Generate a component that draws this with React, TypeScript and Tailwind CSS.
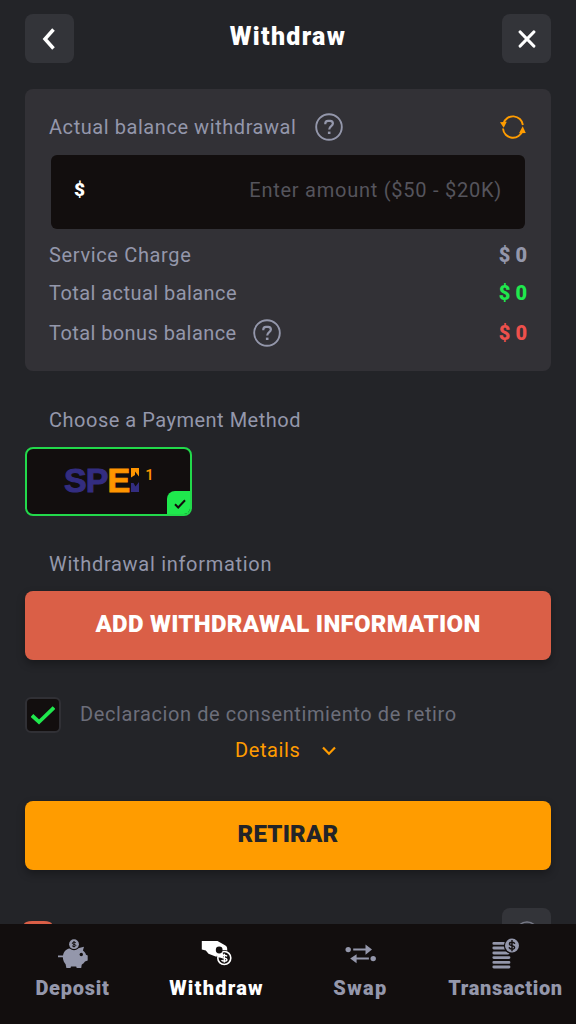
import React from "react";
import clsx from "clsx";

type IconProps = { className?: string };

const HelpIcon = ({ className }: IconProps) => (
  <svg
    viewBox="0 0 28 28"
    fill="none"
    stroke="currentColor"
    className={clsx("h-7 w-7 text-[#9497ab]", className)}
  >
    <circle cx="14" cy="14" r="12.8" strokeWidth="1.9" />
    <path
      d="M10.3 11.2V10.6C10.3 9 11.5 7.9 13 7.9H15.2C16.8 7.9 17.9 9 17.9 10.6C17.9 13.2 14.2 13.2 14.2 16.6"
      strokeWidth="2.2"
    />
    <path d="M14.2 18.6V21" strokeWidth="2.6" />
  </svg>
);

const RefreshIcon = () => (
  <svg viewBox="0 0 26 24" className="h-6 w-[26px] text-[#ff9c00]">
    <g fill="none" stroke="currentColor" strokeWidth="1.9">
      <path d="M3.4 8.5A10 10 0 0 1 22.9 10" />
      <path d="M3 13.5A10 10 0 0 0 22.6 15.5" />
    </g>
    <path d="M0 7.2L6.8 6.8L3.7 12.8Z" fill="currentColor" />
    <path d="M25.8 18L19 18.2L22.7 11.2Z" fill="currentColor" />
  </svg>
);

const DepositIcon = () => (
  <svg viewBox="0 0 30 30" className="h-[30px] w-[30px]">
    <path
      fill="currentColor"
      d="M0 16.6H5C5.7 12 9 9.2 13 9.2H20L26 7.8L24.9 11.6C26.5 12.8 27.6 14.2 28 15.7L29.7 16.4V21.4L27 22.5C26 24 24.8 25 23.7 25.7L23.2 29H18.7L18.2 27.4H13L12.5 29H8.4L7.6 25.2C6 23.6 5 21.2 4.8 18.3H0Z"
    />
    <circle cx="16" cy="5.4" r="5.8" fill="#120e0e" />
    <circle cx="16" cy="5.2" r="4.9" fill="currentColor" />
    <path
      d="M17.9 3.9C17.3 2.9 14.3 2.8 14.3 4.3C14.3 5.7 17.8 4.9 17.8 6.4C17.8 7.8 14.7 7.8 14.1 6.7M16 2V8.4"
      fill="none"
      stroke="#120e0e"
      strokeWidth="1"
    />
    <circle cx="23.3" cy="15.5" r="1.7" fill="#120e0e" />
  </svg>
);

const WithdrawIcon = () => (
  <svg viewBox="0 0 31 30" className="h-[30px] w-[31px]">
    <path
      fill="currentColor"
      d="M.8 2H16.5L24 6.2C25.6 7.2 26.2 8.2 26.2 10V13L20 18.6L14.6 17.4L7.5 14.8L4.8 11.4L.8 10.6Z"
    />
    <circle cx="23.3" cy="19" r="7.9" fill="#120e0e" />
    <circle cx="23.3" cy="19" r="6.5" fill="none" stroke="currentColor" strokeWidth="1.6" />
    <path d="M13.5 13L21 11.5L22.5 16.6L21 19L17 18.2Z" fill="currentColor" />
    <circle cx="18.2" cy="11" r="3.4" fill="#120e0e" />
    <path
      d="M26 17.4C25.3 15.9 20.9 15.8 20.9 17.9C20.9 19.7 25.9 18.5 25.9 20.7C25.9 22.6 21.3 22.6 20.6 20.9M23.3 14.8V23.4"
      fill="none"
      stroke="currentColor"
      strokeWidth="1.4"
    />
  </svg>
);

const SwapIcon = () => (
  <svg viewBox="0 0 32 20" className="h-5 w-8" fill="currentColor">
    <circle cx="3.2" cy="5.6" r="2.7" />
    <path d="M8.2 4.6H20.5V0.5L27 5.6L20.5 10.7V6.6H8.2Z" />
    <circle cx="28.2" cy="14.6" r="2.7" />
    <path d="M23.9 13.6H11.6V10.2L5.2 14.6L11.6 19.2V15.6H23.9Z" />
  </svg>
);

const TransactionIcon = () => (
  <svg viewBox="0 0 28 32" className="h-8 w-7">
    <path
      d="M1.8 5.4H13M1.8 10H13M1.8 15H16M1.8 19.6H17M1.8 24.4H17M1.8 29H17"
      stroke="currentColor"
      strokeWidth="2.8"
      strokeLinecap="round"
    />
    <circle cx="20" cy="7.6" r="8.2" fill="#120e0e" />
    <circle cx="20" cy="7.6" r="7" fill="currentColor" />
    <path
      d="M22.8 5.9C22.2 3.7 17.4 3.7 17.4 6C17.4 8.3 22.6 6.9 22.6 9.4C22.6 11.8 17.8 11.8 17.1 9.3M20 2V13.2"
      fill="none"
      stroke="#120e0e"
      strokeWidth="1.4"
    />
  </svg>
);

const AmountRow = ({
  label,
  labelClass,
  color,
  help,
}: {
  label: string;
  labelClass: string;
  color: string;
  help?: boolean;
}) => (
  <div className="flex h-full items-center justify-between">
    <div className="flex items-center">
      <span className={clsx("text-xl", labelClass)}>{label}</span>
      {help && <HelpIcon className="ml-4" />}
    </div>
    <span className={clsx("-mr-px text-xl font-black", color)}>$ 0</span>
  </div>
);

const navItems = [
  { label: "Deposit", icon: <DepositIcon />, spacing: "tracking-[0.75px]" },
  { label: "Withdraw", icon: <WithdrawIcon />, spacing: "tracking-[1.25px]", active: true },
  { label: "Swap", icon: <SwapIcon />, spacing: "tracking-[1.4px]" },
  { label: "Transaction", icon: <TransactionIcon />, spacing: "tracking-[0.65px]" },
];

const App = () => {
  return (
    <div className="flex h-[1024px] w-[576px] flex-col overflow-hidden bg-[#232428] font-['Roboto',sans-serif] text-[#9497ab]">
      {/* Header */}
      <header className="mx-[25px] mt-3.5 flex h-[49px] shrink-0 items-center justify-between">
        <button className="flex h-[49px] w-[49px] items-center justify-center rounded-lg bg-[#333439] pr-0.5">
          <svg viewBox="0 0 14 22" className="h-[22px] w-3.5 text-white">
            <path d="M11.5 1.5L3 11L11.5 20.5" fill="none" stroke="currentColor" strokeWidth="3.5" />
          </svg>
        </button>
        <h1 className="-mt-1 text-[25px] leading-7 font-black tracking-[1.3px] text-white">
          Withdraw
        </h1>
        <button className="flex h-[49px] w-[49px] items-center justify-center rounded-lg bg-[#333439] pl-px">
          <svg viewBox="0 0 18 18" className="h-[18px] w-[18px] text-white">
            <path
              d="M2.2 2L15.8 16M15.8 2L2.2 16"
              fill="none"
              stroke="currentColor"
              strokeWidth="3.2"
              strokeLinecap="round"
            />
          </svg>
        </button>
      </header>

      {/* Balance */}
      <section className="mx-[25px] mt-[26px] h-[282px] shrink-0 rounded-lg bg-[#323136] pt-[21px] pr-[25px] pl-6">
        <div className="flex h-[34px] items-center justify-between">
          <div className="flex items-center">
            <span className="text-xl tracking-[0.56px]">Actual balance withdrawal</span>
            <HelpIcon className="ml-[18px]" />
          </div>
          <RefreshIcon />
        </div>
        <div className="mt-[11px] mr-px ml-0.5 flex h-[74px] items-center justify-between rounded-md bg-[#120e0e] px-[23px] pb-1">
          <span className="text-[19px] font-black text-white">$</span>
          <span className="text-xl tracking-[0.75px] text-[#55545c]">
            Enter amount ($50 - $20K)
          </span>
        </div>
        <div className="mt-[6px] grid grid-rows-[39px_38px_42px]">
          <AmountRow
            label="Service Charge"
            labelClass="tracking-[0.65px]"
            color="text-[#9497ab]"
          />
          <AmountRow
            label="Total actual balance"
            labelClass="tracking-[0.44px]"
            color="text-[#1fe84d]"
          />
          <AmountRow
            label="Total bonus balance"
            labelClass="tracking-[0.42px]"
            color="text-[#ed504c]"
            help
          />
        </div>
      </section>

      {/* Payment method */}
      <h2 className="mt-[35px] ml-[49px] text-xl leading-7 tracking-[0.51px]">
        Choose a Payment Method
      </h2>
      <div className="relative mt-[13px] ml-[25px] flex h-[69px] w-[167px] shrink-0 overflow-hidden rounded-lg border-2 border-[#22d94b] bg-[#120e0e] pt-[13px] pl-[37px]">
        <span className="flex h-9 items-center font-['Liberation_Sans',sans-serif] text-[34px] leading-9 font-bold tracking-[-0.9px] text-[#332d80] [-webkit-text-stroke:1px_currentColor]">
          SP<span className="text-[#ff9500]">E</span>
        </span>
        <svg viewBox="0 0 8 24" className="mt-[6px] ml-[2px] h-6 w-2">
          <path d="M0 0H8V8.5L4 3.5V7L0 9.5Z" fill="#ff9500" />
          <path d="M0 15H2.5L4.5 18.5L8 14V24H0Z" fill="#332d80" />
        </svg>
        <span className="mt-[3px] ml-[6px] text-[15px] leading-5 font-medium text-[#ff9500]">
          1
        </span>
        <div className="absolute right-[-2px] bottom-[-2px] flex h-[25px] w-[25px] items-center justify-center rounded-tl-lg bg-[#1fe84d]">
          <svg viewBox="0 0 12 10" className="h-2.5 w-3">
            <path d="M1 5.3L4.2 8.5L11 1.3" fill="none" stroke="#120e0e" strokeWidth="2" />
          </svg>
        </div>
      </div>

      {/* Withdrawal information */}
      <h2 className="mt-[34px] ml-[49px] text-xl leading-7 tracking-[0.7px]">
        Withdrawal information
      </h2>
      <button className="mx-[25px] mt-[13px] h-[69px] shrink-0 rounded-lg bg-[#da5f47] pb-[3px] text-2xl font-black tracking-[0.3px] text-white shadow-[0_4px_8px_rgba(0,0,0,0.3)]">
        ADD WITHDRAWAL INFORMATION
      </button>

      {/* Consent */}
      <div className="mt-[37px] ml-[25px] flex h-9 shrink-0">
        <div className="flex h-9 w-9 items-center justify-center rounded-md border-2 border-[#303035] bg-[#120e0e]">
          <svg viewBox="0 0 24 20" className="h-5 w-6 shrink-0">
            <path d="M1 10.5L8 17L23 2.5" fill="none" stroke="#1fe84d" strokeWidth="3.8" />
          </svg>
        </div>
        <span className="mt-[3px] ml-[19px] text-xl leading-7 tracking-[0.6px] text-[#6c6e7a]">
          Declaracion de consentimiento de retiro
        </span>
      </div>
      <button className="mt-[3px] ml-[235px] flex h-7 shrink-0 items-center self-start text-xl tracking-[0.6px] text-[#ff9c00]">
        Details
        <svg viewBox="0 0 14 10" className="mt-0.5 ml-[22px] h-2.5 w-3.5">
          <path d="M1 1.5L7 7.7L13 1.5" fill="none" stroke="currentColor" strokeWidth="2.2" />
        </svg>
      </button>

      <button className="mx-[25px] mt-[37px] h-[69px] shrink-0 rounded-lg bg-[#ff9c00] pb-[3px] text-2xl font-black tracking-[0.2px] text-[#232428] shadow-[0_4px_8px_rgba(0,0,0,0.3)]">
        RETIRAR
      </button>

      {/* Content scrolled under the bottom bar */}
      <div className="mt-[38px] flex h-4 shrink-0 justify-between overflow-hidden pr-[25px] pl-6">
        <div className="mt-[13px] h-7 w-7 rounded-[8px/3px] bg-[#da5f47]" />
        <div className="flex h-12 w-[49px] justify-center rounded-lg bg-[#333439] pt-[13px]">
          <svg viewBox="0 0 24 24" className="h-6 w-6">
            <circle cx="12" cy="12" r="11" fill="none" stroke="#777986" strokeWidth="1.5" />
          </svg>
        </div>
      </div>

      {/* Bottom bar */}
      <nav className="grid h-[100px] shrink-0 grid-cols-[145px_143px_145px_145px] bg-[#120e0e]">
        {navItems.map((item) => (
          <div
            key={item.label}
            className={clsx(
              "flex flex-col items-center pt-3.5",
              item.active ? "text-white" : "text-[#9497ab]",
            )}
          >
            <div className="flex h-8 items-center">{item.icon}</div>
            <span className={clsx("mt-1 text-xl leading-7 font-black", item.spacing)}>
              {item.label}
            </span>
          </div>
        ))}
      </nav>
    </div>
  );
};

export default App;
